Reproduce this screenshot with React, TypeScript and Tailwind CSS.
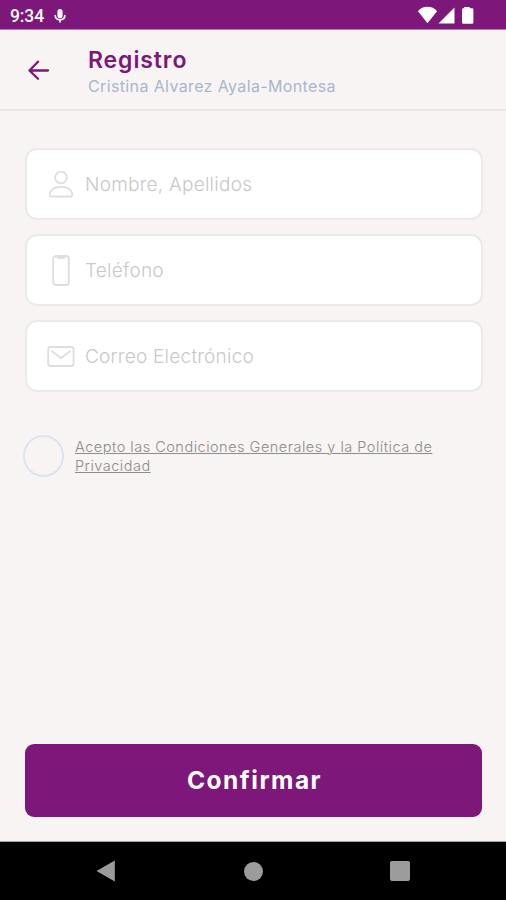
import type { ReactNode } from "react";

const iconProps = {
  fill: "none",
  stroke: "currentColor",
  strokeLinecap: "round" as const,
  strokeLinejoin: "round" as const,
};

function StatusBar() {
  return (
    <div className="flex h-[30px] shrink-0 items-center justify-between border-b border-[#b57bb4] bg-[#7d177a] pr-[31px] pl-[10px] text-white">
      <div className="flex items-center gap-[10px] pt-[3px]">
        <span className="font-[Roboto,sans-serif] text-[17.5px] leading-5 font-medium tracking-[-0.1px]">9:34</span>
        <svg width="12" height="14" viewBox="0 0 12 14" aria-hidden="true">
          <rect x="3.4" y="0" width="5.2" height="9" rx="2.6" fill="currentColor" />
          <path d="M1.2 6.5c0 2.6 2 4.2 4.800 4.200s4.800-1.600 4.800-4.200M6 10.800v2" {...iconProps} strokeWidth="1.7" />
        </svg>
      </div>
      <svg width="57" height="18" viewBox="0 0 57 18" fill="currentColor" aria-hidden="true">
        <path d="M0 5.200C2.400 2.200 5.500.8 9.500.8s7.100 1.400 9.500 4.400l-9.500 12z" />
        <path d="M36.500 1.500v16H20.500z" />
        <path d="M46.500 1h5l.8 1.200h1.900a1.200 1.200 0 0 1 1.200 1.200v13.200a1.200 1.200 0 0 1-1.200 1.200h-9a1.200 1.200 0 0 1-1.200-1.200V3.400a1.200 1.200 0 0 1 1.200-1.200h.5z" />
      </svg>
    </div>
  );
}

function Header() {
  return (
    <header className="flex h-[81px] shrink-0 border-b-2 border-[#e9e6e7] pl-[28px]">
      <button type="button" aria-label="Volver" className="mt-[30px] h-[22px] w-[22px] text-[#7d177a]">
        <svg width="22" height="22" viewBox="0 0 22 22" {...iconProps} strokeWidth="2.3">
          <path d="M20 10.500H1.500M10 1.700L1.500 10.500l8.500 8.300" />
        </svg>
      </button>
      <div className="pt-[16px] pl-[38px]">
        <h1 className="text-[23px] leading-[28px] font-semibold tracking-[0.9px] text-[#7d177a]">Registro</h1>
        <p className="text-[16px] leading-6 tracking-[0.37px] whitespace-nowrap text-[#a9b6d0]">
          Cristina Alvarez Ayala-Montesa
        </p>
      </div>
    </header>
  );
}

function Field({ label, icon }: { label: string; icon: ReactNode }) {
  return (
    <div className="flex h-[72px] items-center rounded-[12px] border-2 border-[#ebe9ea] bg-white pl-[19px]">
      <span className="flex w-[30px] justify-center text-[#dddddf]">{icon}</span>
      <span className="pt-[2px] pl-[9px] text-[19px] leading-7 font-light tracking-[0.25px] text-[#c8c8ca]">{label}</span>
    </div>
  );
}

function UserIcon() {
  return (
    <svg width="26" height="28" viewBox="0 0 26 28" {...iconProps} strokeWidth="1.8">
      <circle cx="13" cy="7.500" r="5.800" />
      <path d="M1.700 24.500C2.500 19 7 16.800 13 16.800s10.500 2.200 11.300 7.700c.1 1.300-.4 2-1.500 2H3.200c-1.100 0-1.600-.7-1.500-2z" />
    </svg>
  );
}

function PhoneIcon() {
  return (
    <svg width="18" height="31" viewBox="0 0 18 31" {...iconProps} strokeWidth="1.8">
      <rect x="1.200" y="1" width="15.600" height="29" rx="2.800" />
      <path d="M5 1.500l1.200 1.400h5.600L13 1.500" />
    </svg>
  );
}

function MailIcon() {
  return (
    <svg width="28" height="21" viewBox="0 0 28 21" {...iconProps} strokeWidth="1.8">
      <rect x="1.200" y="1" width="25.400" height="19" rx="2.200" />
      <path d="M5 5.300l9 6.700 9-6.700" />
    </svg>
  );
}

export default function App() {
  return (
    <div className="flex h-[900px] w-[506px] flex-col overflow-hidden bg-[#f7f4f3] font-[Inter,sans-serif]">
      <StatusBar />
      <Header />

      <main className="flex flex-1 flex-col pt-[37px] pr-[23px] pl-[25px]">
        <div className="flex flex-col gap-[14px]">
          <Field label="Nombre, Apellidos" icon={<UserIcon />} />
          <Field label="Teléfono" icon={<PhoneIcon />} />
          <Field label="Correo Electrónico" icon={<MailIcon />} />
        </div>

        <div className="mt-[43px] flex">
          <button
            type="button"
            role="checkbox"
            aria-checked="false"
            aria-label="Acepto las condiciones"
            className="-ml-[2px] h-[42px] w-[41px] shrink-0 rounded-full border-2 border-[#dde3ef]"
          />
          <p className="pt-[3px] pl-[11px] text-[14.5px] leading-[18.5px] font-light tracking-[0.5px] whitespace-nowrap text-[#8d8b8b] underline decoration-1 underline-offset-1">
            Acepto las Condiciones Generales y la Política de
            <br />
            Privacidad
          </p>
        </div>

        <button
          type="button"
          className="mt-auto mr-px mb-[24px] h-[73px] shrink-0 rounded-[9px] bg-[#7d177a] pl-[2px] text-[24.5px] font-bold tracking-[1.5px] text-white"
        >
          Confirmar
        </button>
      </main>

      <nav className="flex h-[59px] shrink-0 items-center justify-between border-t border-[#a5a3a3] bg-black px-[96px] text-[#9c9c9c]">
        <svg width="20" height="22" viewBox="0 0 20 22" fill="currentColor" aria-hidden="true">
          <path d="M18.800.5v21L.5 11z" />
        </svg>
        <span className="h-[19px] w-[19px] rounded-full bg-[#9c9c9c]" />
        <span className="h-[20px] w-[20px] rounded-[2px] bg-[#9c9c9c]" />
      </nav>
    </div>
  );
}
